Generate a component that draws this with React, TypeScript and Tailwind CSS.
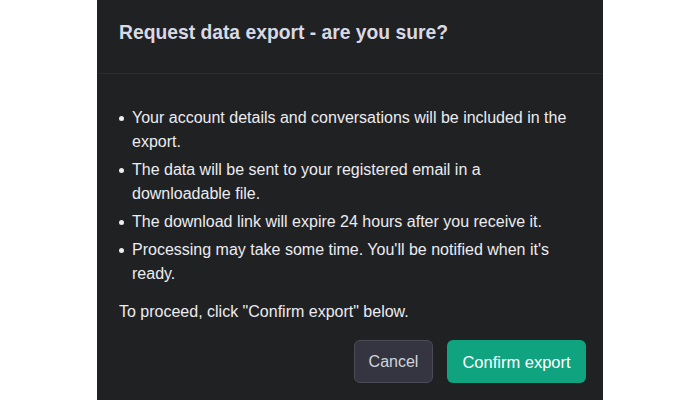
import React from "react";

const items = [
  "Your account details and conversations will be included in the export.",
  "The data will be sent to your registered email in a downloadable file.",
  "The download link will expire 24 hours after you receive it.",
  "Processing may take some time. You'll be notified when it's ready.",
];

export default function App() {
  return (
    <div className="w-[700px] h-[400px] bg-white overflow-hidden flex justify-center" style={{ fontFamily: "'Liberation Sans', Arial, sans-serif" }}>
      <div className="w-[506px] h-[440px] bg-[#202123] flex flex-col">
        <div className="h-[74px] shrink-0 px-[22px] pt-[21px] border-b border-[#2c2d33]">
          <h2 className="text-[19.3px] font-bold text-[#d9d9e3] leading-6">Request data export - are you sure?</h2>
        </div>
        <div className="pt-[32px] pl-[22px] pr-[17px] text-[16px] leading-6 text-[#ececf1]">
          <ul className="flex flex-col gap-[4px]">
            {items.map((t) => (
              <li key={t} className="flex">
                <span className="w-[13px] shrink-0 flex pt-[10px]">
                  <span className="w-[5px] h-[5px] rounded-full bg-[#ececf1]" />
                </span>
                <span className="pr-[8px]">{t}</span>
              </li>
            ))}
          </ul>
          <p className="mt-[14px]">To proceed, click "Confirm export" below.</p>
          <div className="mt-[16px] flex justify-end gap-[14px]">
            <button className="h-[43px] w-[79px] rounded-[6px] border border-[#4a4b56] bg-[#343541] text-[#d1d5db] text-[16px]">Cancel</button>
            <button className="h-[43px] w-[139px] rounded-[6px] bg-[#10a37f] text-white text-[16.5px]">Confirm export</button>
          </div>
        </div>
      </div>
    </div>
  );
}
